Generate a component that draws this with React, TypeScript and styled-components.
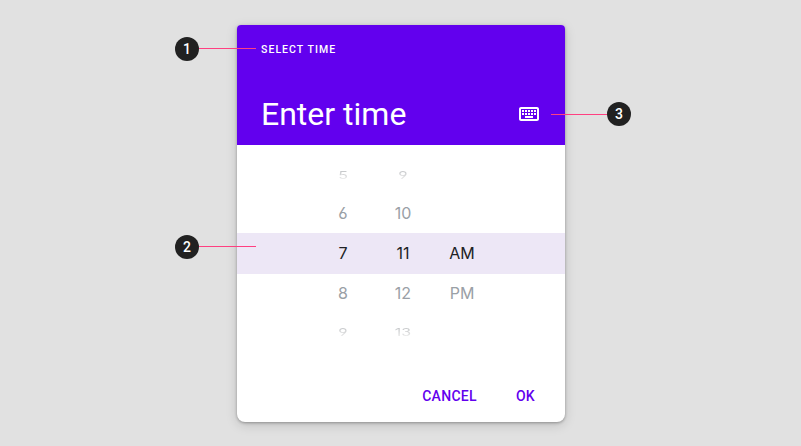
import React from 'react';
import styled, { createGlobalStyle } from 'styled-components';

const GlobalStyle = createGlobalStyle`
  *, *::before, *::after { box-sizing: border-box; }
  body { margin: 0; background: #e1e1e1; font-family: Roboto, sans-serif; }
`;

const Page = styled.main`
  position: relative;
  display: flex;
  justify-content: center;
  align-items: flex-start;
  width: 801px;
  height: 446px;
  padding: 25px 236px 0 237px;
  background: #e1e1e1;
  overflow: hidden;
`;

const Dialog = styled.section`
  display: flex;
  flex-direction: column;
  width: 328px;
  height: 397px;
  background: #fff;
  border-radius: 4px 4px 8px 8px;
  box-shadow: 0 1px 3px rgba(0, 0, 0, 0.3), 0 3px 12px rgba(0, 0, 0, 0.15);
`;

const Header = styled.header`
  display: flex;
  flex-direction: column;
  justify-content: space-between;
  height: 120px;
  padding: 18px 24px 11px;
  color: #fff;
  background: #6200ee;
  border-radius: 4px 4px 0 0;
`;

const Overline = styled.div`
  font-size: 10.5px;
  font-weight: 500;
  line-height: 14px;
  letter-spacing: 1.05px;
`;

const TitleRow = styled.div`
  display: flex;
  align-items: center;
  justify-content: space-between;
`;

const Title = styled.h1`
  margin: 0;
  font-size: 32px;
  font-weight: 400;
  line-height: 40px;
`;

const KeyboardIcon = styled.svg`
  width: 24px;
  height: 24px;
  fill: #fff;
`;

const Wheel = styled.div`
  display: grid;
  grid-template-rows: 20px 48px 41px 38px 39px;
  padding-top: 20px;
  height: 226px;
`;

type Tone = 'edge' | 'near' | 'selected';

const WheelRow = styled.div<{ $tone: Tone }>`
  display: grid;
  grid-template-columns: 60px 60px 58px;
  padding-left: 76px;
  align-items: center;
  font-family: Inter, sans-serif;
  font-feature-settings: 'cv03', 'cv04';
  font-size: 16px;
  font-weight: 400;
  line-height: 20px;
  text-align: center;
  color: ${({ $tone }) => ($tone === 'selected' ? '#202124' : '#9aa0a6')};
  background: ${({ $tone }) => ($tone === 'selected' ? '#ede7f6' : 'transparent')};

  &:nth-child(2) {
    padding-top: 8px;
  }

  &:nth-child(3) {
    padding-bottom: 1px;
  }
`;

const WheelValue = styled.span<{ $tone: Tone }>`
  display: block;
  ${({ $tone }) =>
    $tone === 'edge' &&
    `transform: scaleY(0.68);
     color: transparent;
     background: linear-gradient(#c8cacc 25%, #e8e8e8 80%);
     background-clip: text;`}
`;

const Actions = styled.footer`
  display: flex;
  justify-content: flex-end;
  gap: 39px;
  padding: 15px 30px 0 0;
`;

const TextButton = styled.button`
  padding: 0;
  border: 0;
  background: none;
  color: #6200ee;
  font: 500 14px/20px Roboto, sans-serif;
  letter-spacing: 0.3px;
`;

const Callout = styled.div<{ $x: number; $y: number; $flip?: boolean }>`
  position: absolute;
  left: ${({ $x }) => $x}px;
  top: ${({ $y }) => $y}px;
  display: flex;
  flex-direction: ${({ $flip }) => ($flip ? 'row-reverse' : 'row')};
  align-items: flex-start;
`;

const Badge = styled.span`
  width: 24px;
  height: 24px;
  border-radius: 50%;
  background: #212121;
  color: #fff;
  font-size: 14px;
  font-weight: 500;
  line-height: 24px;
  text-align: center;
`;

const Leader = styled.span<{ $length: number; $flip?: boolean }>`
  width: ${({ $length }) => $length}px;
  height: 1px;
  margin-top: ${({ $flip }) => ($flip ? 12 : 11)}px;
  background: #ff4081;
`;

const rows: { tone: Tone; values: string[] }[] = [
  { tone: 'edge', values: ['5', '9'] },
  { tone: 'near', values: ['6', '10'] },
  { tone: 'selected', values: ['7', '11', 'AM'] },
  { tone: 'near', values: ['8', '12', 'PM'] },
  { tone: 'edge', values: ['9', '13'] },
];

const callouts = [
  { label: '1', x: 175, y: 37, length: 57 },
  { label: '2', x: 175, y: 235, length: 57 },
  { label: '3', x: 551, y: 102, length: 56, flip: true },
];

export default function App() {
  return (
    <>
      <GlobalStyle />
      <Page>
        <Dialog>
          <Header>
            <Overline>SELECT TIME</Overline>
            <TitleRow>
              <Title>Enter time</Title>
              <KeyboardIcon viewBox="0 0 24 24" aria-label="Keyboard">
                <path d="M20 7v10H4V7h16m0-2H4c-1.1 0-1.99.9-1.99 2L2 17c0 1.1.9 2 2 2h16c1.1 0 2-.9 2-2V7c0-1.1-.9-2-2-2zm-9 3h2v2h-2V8zm0 3h2v2h-2v-2zM8 8h2v2H8V8zm0 3h2v2H8v-2zm-3 0h2v2H5v-2zm0-3h2v2H5V8zm3 6h8v2H8v-2zm6-3h2v2h-2v-2zm0-3h2v2h-2V8zm3 3h2v2h-2v-2zm0-3h2v2h-2V8z" />
              </KeyboardIcon>
            </TitleRow>
          </Header>
          <Wheel>
            {rows.map(({ tone, values }) => (
              <WheelRow key={values.join()} $tone={tone}>
                {values.map((value) => (
                  <WheelValue key={value} $tone={tone}>{value}</WheelValue>
                ))}
              </WheelRow>
            ))}
          </Wheel>
          <Actions>
            <TextButton>CANCEL</TextButton>
            <TextButton>OK</TextButton>
          </Actions>
        </Dialog>
        {callouts.map(({ label, x, y, length, flip }) => (
          <Callout key={label} $x={x} $y={y} $flip={flip}>
            <Badge>{label}</Badge>
            <Leader $length={length} $flip={flip} />
          </Callout>
        ))}
      </Page>
    </>
  );
}
